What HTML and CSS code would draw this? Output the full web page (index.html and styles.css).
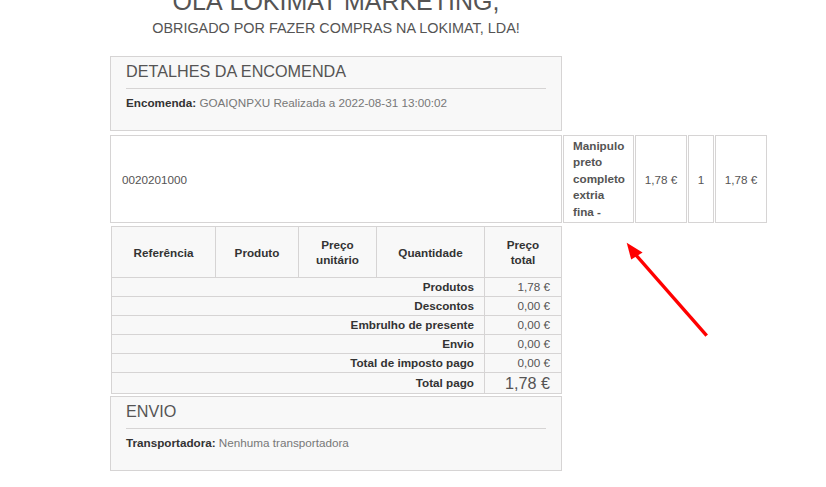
FILE: index.html
```html
<!DOCTYPE html>
<html lang="pt">
<head>
<meta charset="utf-8">
<title>Encomenda</title>
<link rel="stylesheet" href="styles.css">
</head>
<body>
<div class="page">
  <h1 class="title">OLÁ LOKIMAT MARKETING,</h1>
  <p class="subtitle">OBRIGADO POR FAZER COMPRAS NA LOKIMAT, LDA!</p>

  <div class="box">
    <h2 class="box-title">DETALHES DA ENCOMENDA</h2>
    <p class="box-text"><strong class="lbl">Encomenda:</strong> GOAIQNPXU Realizada a 2022-08-31 13:00:02</p>
  </div>

  <div class="prod-row">
    <div class="cell cell-ref">0020201000</div>
    <div class="cell cell-name"><span class="name-text">Manipulo preto completo extria fina -</span></div>
    <div class="cell cell-price">1,78 €</div>
    <div class="cell cell-qty">1</div>
    <div class="cell cell-total">1,78 €</div>
  </div>

  <table class="order">
    <colgroup>
      <col class="c1"><col class="c2"><col class="c3"><col class="c4"><col class="c5">
    </colgroup>
    <thead>
      <tr>
        <th>Referência</th>
        <th>Produto</th>
        <th>Preço<br>unitário</th>
        <th>Quantidade</th>
        <th>Preço<br>total</th>
      </tr>
    </thead>
    <tbody>
      <tr><td colspan="4" class="lab">Produtos</td><td class="val">1,78 €</td></tr>
      <tr><td colspan="4" class="lab">Descontos</td><td class="val">0,00 €</td></tr>
      <tr><td colspan="4" class="lab">Embrulho de presente</td><td class="val">0,00 €</td></tr>
      <tr><td colspan="4" class="lab">Envio</td><td class="val">0,00 €</td></tr>
      <tr><td colspan="4" class="lab">Total de imposto pago</td><td class="val">0,00 €</td></tr>
      <tr class="grand"><td colspan="4" class="lab">Total pago</td><td class="val big">1,78 €</td></tr>
    </tbody>
  </table>

  <div class="box box-ship">
    <h2 class="box-title">ENVIO</h2>
    <p class="box-text"><strong class="lbl">Transportadora:</strong> Nenhuma transportadora</p>
  </div>
</div>

<svg class="arrow" width="130" height="120" viewBox="0 0 130 120" aria-hidden="true">
  <line x1="106.7" y1="105.7" x2="35" y2="24" stroke="#ff0000" stroke-width="3.4" stroke-linecap="butt"/>
  <polygon points="26.7,12.7 31.2,29.6 42.6,22.4" fill="#ff0000"/>
</svg>
</body>
</html>
```

FILE: styles.css
```css
html, body {
  margin: 0;
  padding: 0;
  background: #ffffff;
}

body {
  font-family: "Liberation Sans", Arial, sans-serif;
  color: #555454;
  font-size: 11.7px;
}

.page {
  width: 452px;
  margin-left: 110px;
}

.title {
  margin: -13px 0 0;
  font-size: 25px;
  line-height: 28px;
  font-weight: normal;
  text-align: center;
  white-space: nowrap;
  color: #555454;
}

.subtitle {
  margin: 4px 0 0;
  font-size: 14.4px;
  line-height: 18px;
  text-align: center;
  white-space: nowrap;
  color: #555454;
}

.box {
  margin-top: 19px;
  border: 1px solid #d6d4d4;
  background: #f8f8f8;
  padding: 5px 15px 20px;
}

.box-title {
  margin: 0;
  font-size: 16.2px;
  line-height: 19px;
  font-weight: normal;
  padding-bottom: 7px;
  border-bottom: 1px solid #d6d4d4;
  color: #555454;
}

.box-text {
  margin: 6px 0 0;
  line-height: 15px;
  color: #777777;
}

.lbl {
  color: #333333;
  font-weight: bold;
}

.prod-row {
  margin-top: 4px;
  display: flex;
  gap: 1px;
  height: 88px;
  width: 657px;
}

.cell {
  box-sizing: border-box;
  border: 1px solid #d6d4d4;
  display: flex;
  align-items: center;
  color: #555454;
  flex: none;
}

.cell-ref {
  width: 452px;
  padding-left: 11px;
}

.cell-name {
  width: 71px;
  padding: 0 0 0 9px;
  font-weight: bold;
  line-height: 16.4px;
}

.name-text {
  display: block;
  width: 53px;
}

.cell-price {
  width: 52px;
  justify-content: center;
}

.cell-qty {
  width: 26px;
  justify-content: center;
}

.cell-total {
  width: 52px;
  justify-content: center;
}

.order {
  margin: 3px 0 0 1px;
  width: 450px;
  border-collapse: collapse;
  background: #f8f8f8;
  table-layout: fixed;
}

.c1 { width: 104px; }
.c2 { width: 83px; }
.c3 { width: 78px; }
.c4 { width: 108px; }
.c5 { width: 77px; }

.order th,
.order td {
  border: 1px solid #d6d4d4;
  font-size: 11.7px;
}

.order th {
  height: 50px;
  padding: 0;
  color: #333333;
  font-weight: bold;
  line-height: 15px;
  text-align: center;
  vertical-align: middle;
}

.order td {
  height: 18px;
  padding: 0 10px;
  line-height: 14px;
  vertical-align: middle;
}

.order .lab {
  text-align: right;
  color: #333333;
  font-weight: bold;
}

.order .val {
  text-align: right;
  color: #555454;
  padding-right: 11px;
}

.order .grand td {
  height: 20px;
}

.order .big {
  font-size: 16.2px;
  line-height: 18px;
}

.box-ship {
  margin-top: 2px;
}

.arrow {
  position: absolute;
  left: 600px;
  top: 230px;
}
```
